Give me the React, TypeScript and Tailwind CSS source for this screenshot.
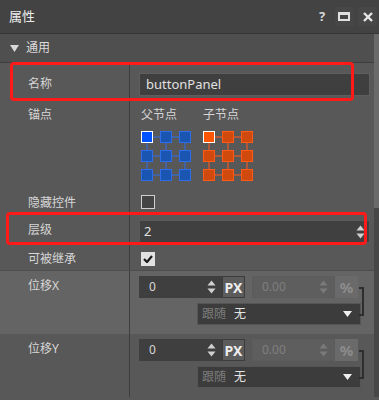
import React from 'react';

const font = "font-['Noto_Sans','Noto_Sans_CJK_SC',sans-serif]";

function Spinner({ color = '#d0d0d0' }: { color?: string }) {
  return (
    <svg width="9" height="14" viewBox="0 0 9 14">
      <polygon points="0.5,5.5 4.5,0.5 8.5,5.5" fill={color} />
      <polygon points="0.5,8.5 4.5,13.5 8.5,8.5" fill={color} />
    </svg>
  );
}

function AnchorGrid({ fill, stroke, selFill }: { fill: string; stroke: string; selFill: string }) {
  const pos = [0, 19, 38];
  return (
    <svg width="51" height="51" viewBox="0 0 51 51">
      {pos.map((p) => (
        <g key={p}>
          <line x1="6" y1={p + 6} x2="44" y2={p + 6} stroke={stroke} strokeWidth="1" />
          <line x1={p + 6} y1="6" x2={p + 6} y2="44" stroke={stroke} strokeWidth="1" />
        </g>
      ))}
      {pos.map((y, r) =>
        pos.map((x, c) => {
          const sel = r === 0 && c === 0;
          return (
            <rect
              key={`${r}-${c}`}
              x={x + 0.5}
              y={y + 0.5}
              width="11"
              height="11"
              fill={sel ? selFill : fill}
              stroke={sel ? '#ffffff' : stroke}
              strokeWidth="1"
            />
          );
        })
      )}
    </svg>
  );
}

function Offset({ label, bg }: { label: string; bg: string }) {
  return (
    <div className={`flex h-[63px] ${bg}`}>
      <div className="w-[130px] shrink-0 border-r border-[#3e3e3e] pl-[28px] pt-[7px] text-[12px] leading-4 text-[#d6d6d6]">
        {label}
      </div>
      <div className="flex-1 pl-[9px] pt-[5px]">
        <div className="flex items-center">
          <div className="flex h-[22px] w-[83px] items-center justify-between bg-[#3f3f3f] pl-[10px] pr-[6px] text-[12px] text-[#d8d8d8]">
            <span>0</span>
            <Spinner />
          </div>
          <div className="flex h-[22px] w-[23px] items-center justify-center border border-[#3c3c3c] bg-[#5c5c5c] text-[14px] font-bold text-[#ececec]">
            PX
          </div>
          <div className="ml-[7px] flex h-[22px] w-[83px] items-center justify-between border border-[#5c5c5c] bg-[#5e5e5e] pl-[9px] pr-[6px] text-[12px] text-[#7e7e7e]">
            <span>0.00</span>
            <Spinner color="#7a7a7a" />
          </div>
          <div className="flex h-[22px] w-[23px] items-center justify-center bg-[#6a6a6a] text-[15px] font-bold text-[#8c8c8c]">
            %
          </div>
        </div>
        <div className="relative mt-[5px] ml-[58px] flex h-[22px] w-[164px] items-center border border-[#555555] bg-[#3c3c3c] pl-[4px] pr-[8px] text-[12px]">
          <span className="text-[#7c7c7c]">跟随</span>
          <span className="ml-[8px] text-[#e4e4e4]">无</span>
          <svg className="ml-auto" width="9" height="6" viewBox="0 0 9 6">
            <polygon points="0,0 9,0 4.5,6" fill="#f0f0f0" />
          </svg>
          <div className="absolute right-[-4px] top-[-17px] h-[29px] w-[5px] border-y-2 border-r-2 border-[#2e2e2e]" />
        </div>
      </div>
    </div>
  );
}

export default function App() {
  return (
    <div className={`relative h-[400px] w-[379px] overflow-hidden bg-[#585858] ${font}`}>
      {/* Title bar */}
      <div className="flex h-[34px] items-center border-b border-[#363636] bg-[#434343] pl-[9px] pr-[2px]">
        <span className="text-[13px] text-[#ececec]">属性</span>
        <div className="ml-auto flex items-center">
          <div className="flex h-[19px] w-[18px] items-center justify-center text-[13px] font-bold text-[#d8d8d8]">?</div>
          <div className="ml-[4px] flex h-[19px] w-[18px] items-center justify-center bg-[#474747]">
            <div className="h-[9px] w-[12px] border-2 border-t-[3px] border-[#e0e0e0]" />
          </div>
          <div className="ml-[5px] flex h-[19px] w-[19px] items-center justify-center bg-[#474747]">
            <svg width="10" height="10" viewBox="0 0 10 10">
              <path d="M1 1 L9 9 M9 1 L1 9" stroke="#e6e6e6" strokeWidth="2.4" />
            </svg>
          </div>
        </div>
      </div>

      <div className="flex">
        <div className="flex-1">
          {/* Section header */}
          <div className="flex h-[29px] items-center border-b border-[#3e3e3e] bg-[#4f4f4f] pl-[10px]">
            <svg width="9" height="7" viewBox="0 0 9 7">
              <polygon points="0,0 9,0 4.5,7" fill="#d8d8d8" />
            </svg>
            <span className="ml-[7px] text-[12px] text-[#dcdcdc]">通用</span>
          </div>

          {/* 名称 */}
          <div className="flex h-[40px]">
            <div className="w-[130px] shrink-0 border-r border-[#3e3e3e] pl-[28px] pt-[13px] text-[12px] leading-4 text-[#d6d6d6]">名称</div>
            <div className="flex-1 pl-[9px] pr-[4px] pt-[10px]">
              <div className="flex h-[23px] items-center border border-[#5e5e5e] bg-[#3f3f3f] pl-[6px] text-[13px] text-[#e0e0e0]">
                buttonPanel
              </div>
            </div>
          </div>

          {/* 锚点 */}
          <div className="flex h-[85px]">
            <div className="w-[130px] shrink-0 border-r border-[#3e3e3e] pl-[28px] pt-[4px] text-[12px] leading-4 text-[#d6d6d6]">锚点</div>
            <div className="flex flex-1 gap-[11px] pl-[11px] pt-[4px]">
              <div>
                <div className="text-[12px] leading-4 text-[#d6d6d6]">父节点</div>
                <div className="mt-[8px]">
                  <AnchorGrid fill="#1b55b2" stroke="#2f6ee8" selFill="#0052ff" />
                </div>
              </div>
              <div>
                <div className="text-[12px] leading-4 text-[#d6d6d6]">子节点</div>
                <div className="mt-[8px]">
                  <AnchorGrid fill="#cf4a0c" stroke="#ff5a18" selFill="#ff5500" />
                </div>
              </div>
            </div>
          </div>

          {/* 隐藏控件 */}
          <div className="flex h-[28px]">
            <div className="w-[130px] shrink-0 border-r border-[#3e3e3e] pl-[28px] pt-[7px] text-[12px] leading-4 text-[#d6d6d6]">隐藏控件</div>
            <div className="flex-1 pl-[11px] pt-[7px]">
              <div className="h-[14px] w-[14px] border border-[#cfcfcf] bg-[#444444]" />
            </div>
          </div>

          {/* 层级 */}
          <div className="flex h-[30px]">
            <div className="w-[130px] shrink-0 border-r border-[#3e3e3e] pl-[28px] pt-[6px] text-[12px] leading-4 text-[#d6d6d6]">层级</div>
            <div className="flex-1 pl-[9px] pr-[4px] pt-[4px]">
              <div className="flex h-[23px] items-center justify-between border border-[#5a5a5a] bg-[#404040] pl-[4px] pr-[4px] text-[13px] text-[#e0e0e0]">
                <span>2</span>
                <Spinner />
              </div>
            </div>
          </div>

          {/* 可被继承 */}
          <div className="flex h-[25px] border-b border-[#4c4c4c]">
            <div className="w-[130px] shrink-0 border-r border-[#3e3e3e] pl-[28px] pt-[5px] text-[12px] leading-4 text-[#d6d6d6]">可被继承</div>
            <div className="flex-1 pl-[11px] pt-[6px]">
              <div className="flex h-[14px] w-[14px] items-center justify-center bg-[#e2e2e2]">
                <svg width="10" height="8" viewBox="0 0 10 8">
                  <path d="M1 4 L4 7 L9 1" stroke="#1a1a1a" strokeWidth="2.2" fill="none" />
                </svg>
              </div>
            </div>
          </div>

          <Offset label="位移X" bg="bg-[#646464]" />
          <Offset label="位移Y" bg="bg-[#585858]" />
        </div>

        {/* Scrollbar */}
        <div className="flex w-[5px] shrink-0 flex-col bg-[#474747]">
          <div className="h-[174px] bg-[#6a6a6a]" />
        </div>
      </div>

      {/* Annotation boxes */}
      <div className="absolute left-[10px] top-[62px] h-[39px] w-[344px] rounded-[4px] border-[3px] border-[#ff1a1a]" />
      <div className="absolute left-[6px] top-[212px] h-[33px] w-[361px] rounded-[4px] border-[3px] border-[#ff1a1a]" />
    </div>
  );
}
